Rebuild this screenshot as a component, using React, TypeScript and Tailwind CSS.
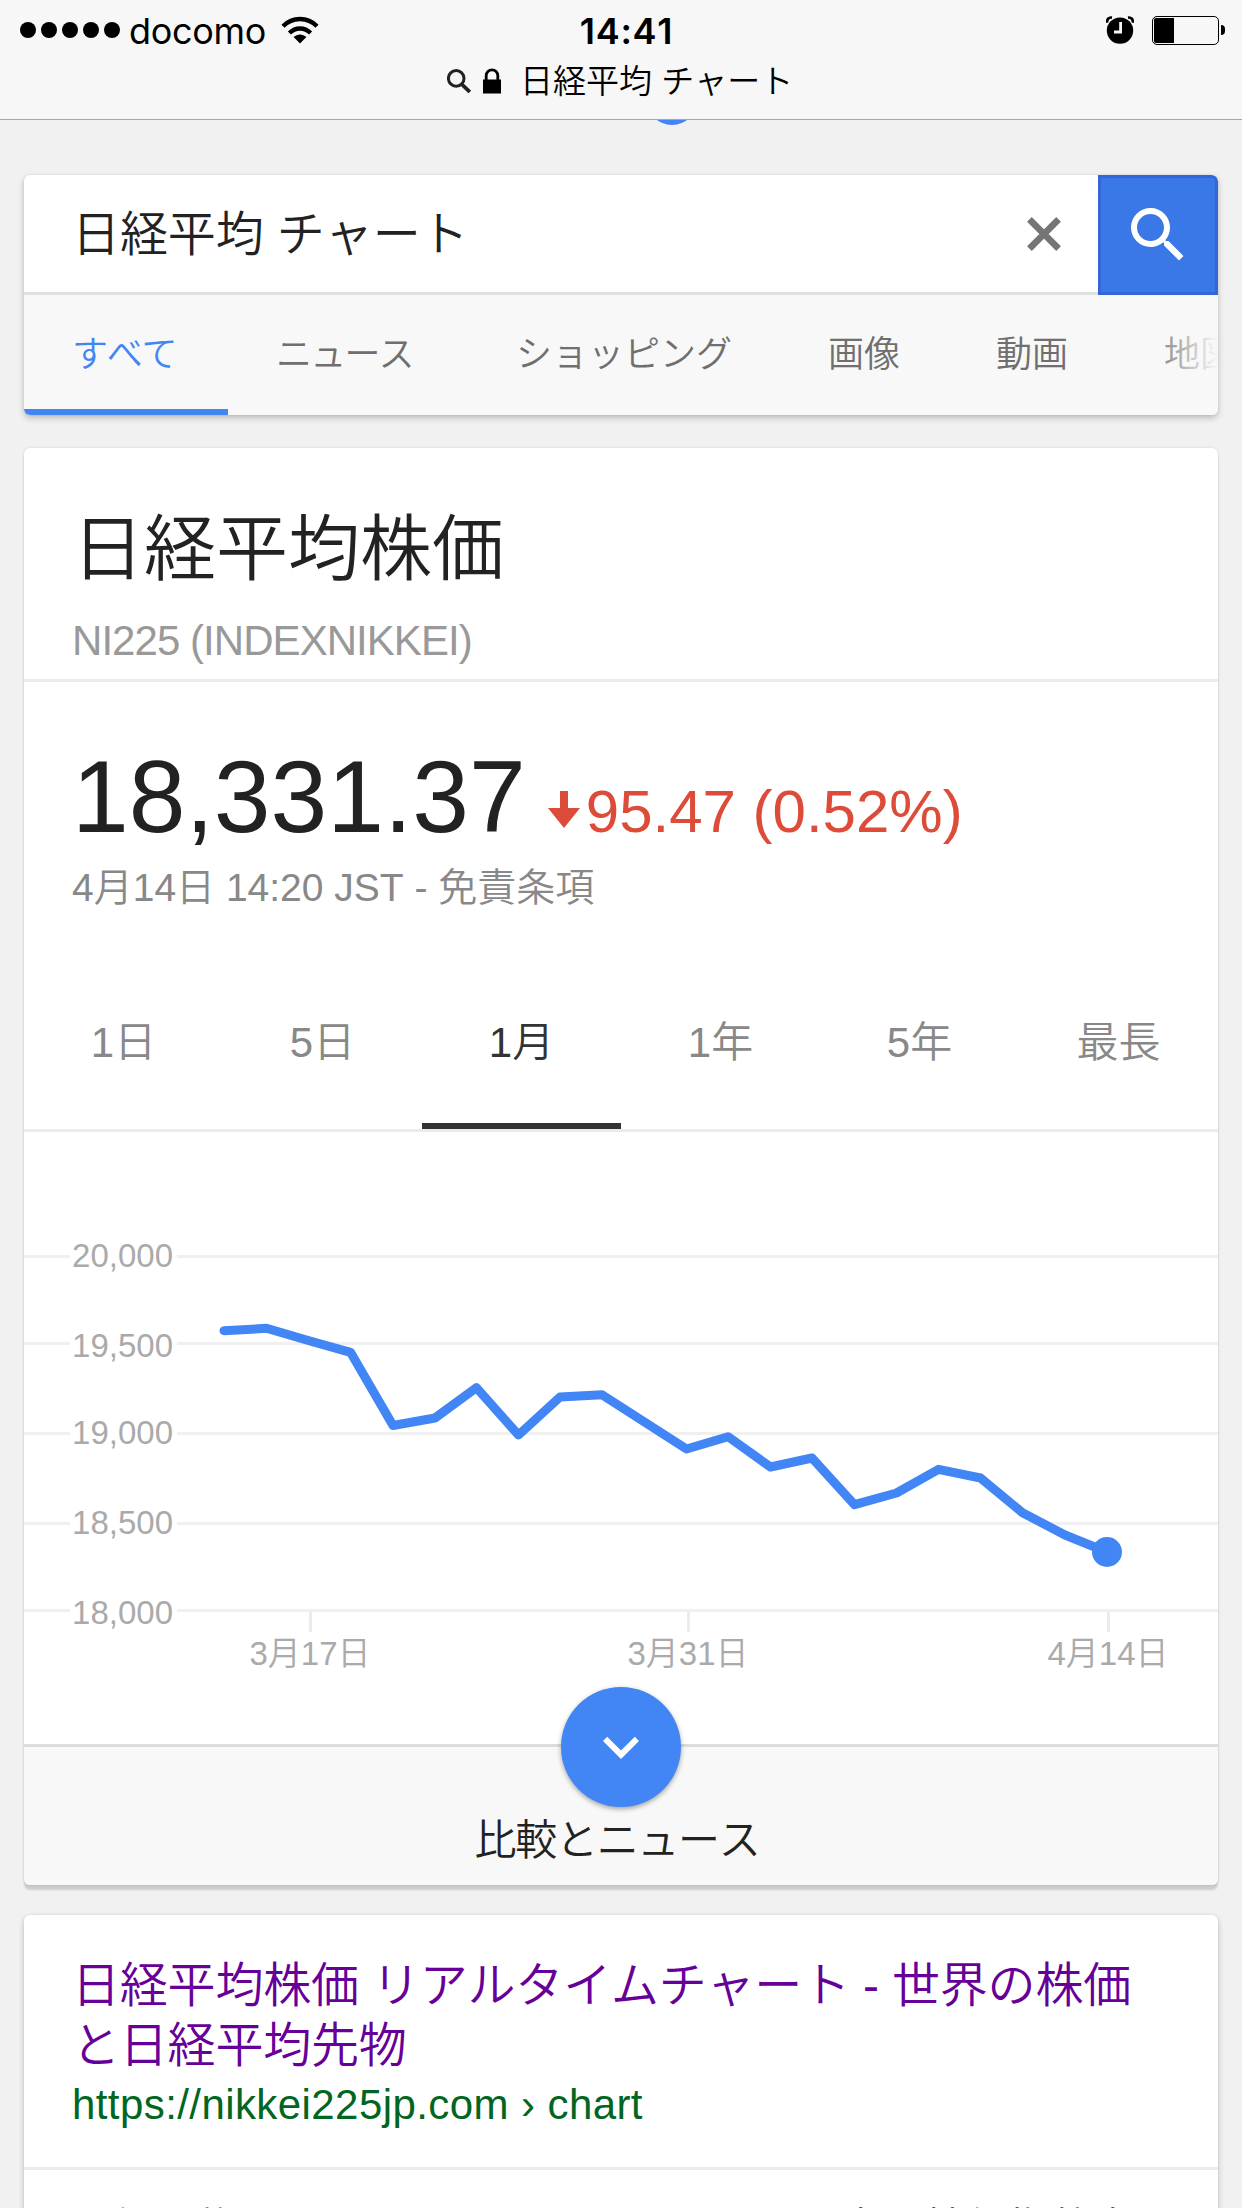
import React from "react";

const searchTabs = [
  { label: "すべて", style: "w-[204px] tracking-[-1.2px] text-[#4285f4] border-b-[6px] border-[#4285f4]" },
  { label: "ニュース", style: "w-60 tracking-[-1.8px] text-[#6f6f6f]" },
  { label: "ショッピング", style: "w-[312px] text-[#6f6f6f]" },
  { label: "画像", style: "w-[168px] text-[#6f6f6f]" },
  { label: "動画", style: "w-[168px] text-[#6f6f6f]" },
  { label: "地図", style: "w-[168px] text-[#6f6f6f]" },
];

const ranges = ["1日", "5日", "1月", "1年", "5年", "最長"];

// Chart coordinates are relative to the 1194x612 drawing area
const points = [
  [200, 198.7],
  [242.5, 196.3],
  [286, 209],
  [326.5, 220.3],
  [369, 293.5],
  [411, 286],
  [452.5, 255.7],
  [494.5, 303],
  [536, 265],
  [578, 262.7],
  [662.5, 317],
  [704, 304.7],
  [746.5, 335],
  [788, 326],
  [830.5, 372.7],
  [872.5, 361],
  [914.5, 337.3],
  [956.5, 346],
  [998.5, 380.7],
  [1041, 403],
  [1083, 420],
];

const yAxis = [
  { label: "20,000", line: 124.5, base: 135 },
  { label: "19,500", line: 211.5, base: 225 },
  { label: "19,000", line: 301.5, base: 312 },
  { label: "18,500", line: 391.5, base: 402 },
  { label: "18,000", line: 478.5, base: 492 },
];

const xAxis = [
  { label: "3月17日", x: 286.5 },
  { label: "3月31日", x: 664.5 },
  { label: "4月14日", x: 1084.5 },
];

const StatusBar = () => (
  <div className="h-[60px] pt-3 pl-5 pr-[17px] grid grid-cols-3 items-start font-['Inter',sans-serif] text-black">
    <div className="h-9 flex items-center">
      <div className="flex gap-[5px]">
        {[0, 1, 2, 3, 4].map((i) => (
          <span key={i} className="size-4 rounded-full bg-black" />
        ))}
      </div>
      <span className="ml-[9px] pt-0.5 text-[36px] leading-9 tracking-[-0.3px]">docomo</span>
      <svg className="ml-[15px] w-[38px] h-[28px]" viewBox="0 0 38 28" fill="none">
        <path d="M2 10.2C11.5 0.6 26.5 0.6 36 10.2" stroke="black" strokeWidth="4.4" />
        <path d="M8.4 17C14.4 11 23.6 11 29.6 17" stroke="black" strokeWidth="4.4" />
        <path d="M19 27.5L12.6 21C16.4 17.6 21.6 17.6 25.4 21Z" fill="black" />
      </svg>
    </div>
    <div className="h-9 pt-px pl-2 text-center text-[36px] leading-9 font-semibold tracking-[0.7px]">14:41</div>
    <div className="h-9 flex items-center justify-end">
      <svg className="w-7 h-[28px]" viewBox="0 0 28 28">
        <circle cx="14" cy="14.6" r="13.2" fill="black" />
        <path d="M1.4 6.6C0.6 3.4 2.6 1.2 6 1.6" stroke="black" strokeWidth="2.6" fill="none" />
        <path d="M26.6 6.6C27.4 3.4 25.4 1.2 22 1.6" stroke="black" strokeWidth="2.6" fill="none" />
        <path d="M14.6 6V16H8" stroke="#f7f7f7" strokeWidth="2.8" fill="none" />
      </svg>
      <div className="ml-[18px] w-[67px] h-[29px] border border-black rounded-[5px] p-px">
        <div className="w-5 h-full bg-black rounded-l-[2px]" />
      </div>
      <div className="ml-0.5 w-1 h-[10px] bg-black rounded-r-full" />
    </div>
  </div>
);

const AddressBar = () => (
  <div className="h-[42px] pl-[447px] flex items-center text-black">
    <svg className="w-6 h-6" viewBox="0 0 24 24" fill="none" stroke="#222" strokeWidth="3">
      <circle cx="9.2" cy="9.4" r="7.8" />
      <path d="M14.5 15L22.8 23" strokeWidth="3.8" />
    </svg>
    <svg className="ml-3 w-[18px] h-[26px]" viewBox="0 0 18 26">
      <rect x="0" y="11.5" width="18" height="14" fill="black" />
      <path d="M3.2 12V7.6a5.8 5.8 0 0 1 11.6 0V12" fill="none" stroke="black" strokeWidth="2.8" />
    </svg>
    <span className="ml-[19px] pt-px text-[33px] leading-[42px] font-[350]">日経平均 チャート</span>
  </div>
);

const SearchCard = () => (
  <div className="h-60 rounded-md bg-white shadow-[0_3px_6px_rgba(0,0,0,0.22),0_0_3px_rgba(0,0,0,0.08)] overflow-hidden">
    <div className="h-[120px] flex">
      <div className="flex-1 flex items-center justify-between pl-12 pr-[37px] border-b-[3px] border-[#e0e0e0]">
        <span className="pt-0.5 text-[48px] leading-[60px] tracking-[-0.1px] font-[350] text-[#222]">日経平均 チャート</span>
        <svg className="size-[34px]" viewBox="0 0 34 34" stroke="#757575" strokeWidth="6.6">
          <path d="M2.4 2.4L31.6 31.6M31.6 2.4L2.4 31.6" />
        </svg>
      </div>
      <button className="size-[120px] flex items-center justify-center rounded-tr-md bg-[#3b78e7] border-[3px] border-[#3367d6]">
        <svg className="size-[72px]" viewBox="0 0 24 24" fill="white">
          <path d="M15.5 14h-.79l-.28-.27A6.47 6.47 0 0 0 16 9.5 6.5 6.5 0 1 0 9.5 16c1.61 0 3.09-.59 4.23-1.57l.27.28v.79l5 4.99L20.49 19l-4.99-5zm-6 0C7.01 14 5 11.99 5 9.5S7.01 5 9.5 5 14 7.01 14 9.5 11.99 14 9.5 14z" />
        </svg>
      </button>
    </div>
    <div className="relative h-[120px] flex bg-[#f8f8f8] overflow-hidden">
      {searchTabs.map((tab) => (
        <div
          key={tab.label}
          className={`shrink-0 pl-12 pt-[3px] text-[36px] leading-[114px] whitespace-nowrap font-[350] ${tab.style}`}
        >
          {tab.label}
        </div>
      ))}
      <div className="absolute right-0 top-0 w-[72px] h-full bg-gradient-to-r from-[#f8f8f8]/0 to-[#f8f8f8]" />
    </div>
  </div>
);

const Chart = () => (
  <svg className="block w-full h-[612px]" viewBox="0 0 1194 612">
    {yAxis.map((y) => (
      <g key={y.label}>
        <path d={`M0 ${y.line}H46M153 ${y.line}H1194`} stroke="#f0f0f0" strokeWidth="3" />
        <text x="149" y={y.base} textAnchor="end" fontSize="33" fill="#aaa">
          {y.label}
        </text>
      </g>
    ))}
    {xAxis.map((x) => (
      <g key={x.label}>
        <path d={`M${x.x} 480V500`} stroke="#ebebeb" strokeWidth="3" />
        <text x={x.x - 0.5} y="533" textAnchor="middle" fontSize="33" fontWeight="350" fill="#aaa">
          {x.label}
        </text>
      </g>
    ))}
    <polyline
      points={points.map((p) => p.join(",")).join(" ")}
      fill="none"
      stroke="#4285f4"
      strokeWidth="9"
      strokeLinecap="round"
      strokeLinejoin="round"
    />
    <circle cx="1083" cy="420" r="15" fill="#4285f4" />
  </svg>
);

const QuoteCard = () => (
  <div className="mt-[33px] h-[1437px] rounded-md bg-white shadow-[0_5px_2px_rgba(0,0,0,0.15),0_0_3px_rgba(0,0,0,0.12)] overflow-hidden">
    <div className="h-[234px] px-12 pt-[56px] border-b-[3px] border-[#ebebeb]">
      <h1 className="text-[72px] leading-[90px] font-[350] text-[#222]">日経平均株価</h1>
      <p className="mt-[23px] text-[42px] leading-[48px] tracking-[-0.95px] text-[#999]">NI225 (INDEXNIKKEI)</p>
    </div>

    <div className="h-[253px] pl-12 pt-[60px]">
      <div className="h-[122px] flex items-baseline leading-[110px]">
        <span className="text-[102px] text-[#222]">18,331.37</span>
        <svg className="ml-[22px] w-8 h-[41px]" viewBox="0 0 32 41" fill="#dd4b39">
          <path d="M12 0h8v17h12L16 37 0 17h12z" />
        </svg>
        <span className="ml-[6px] text-[60px] text-[#dd4b39]">95.47 (0.52%)</span>
      </div>
      <p className="text-[39px] leading-[48px] font-[350] text-[#888]">4月14日 14:20 JST - 免責条項</p>
    </div>

    {/* Range selector */}
    <div className="h-[197px] flex border-b-[3px] border-[#ebebeb]">
      {ranges.map((range) => (
        <div
          key={range}
          className={
            range === "1月"
              ? "flex-1 pt-[83px] text-center text-[42px] leading-[50px] font-[350] text-[#333] border-b-[6px] border-[#333]"
              : "flex-1 pt-[83px] text-center text-[42px] leading-[50px] font-[350] text-[#888]"
          }
        >
          {range}
        </div>
      ))}
    </div>

    <Chart />

    <div className="h-[141px] pt-[69px] pr-[8px] bg-[#f8f8f8] border-t-[3px] border-[#dcdcdc] text-center text-[42px] leading-[50px] tracking-[-1.3px] font-[350] text-[#222]">
      比較とニュース
    </div>
  </div>
);

const ResultCard = () => (
  <div className="mt-[30px] h-[400px] rounded-md bg-white shadow-[0_3px_6px_rgba(0,0,0,0.2),0_0_3px_rgba(0,0,0,0.08)]">
    <div className="h-[255px] px-12 pt-[41px] border-b-[3px] border-[#ebebeb]">
      <h2 className="text-[48px] leading-[60px] tracking-[-0.2px] font-[350] text-[#609]">
        日経平均株価 リアルタイムチャート - 世界の株価
        <br />
        と日経平均先物
      </h2>
      <p className="mt-[5px] text-[42px] leading-[48px] tracking-[0.42px] text-[#006621]">
        https://nikkei225jp.com › chart
      </p>
    </div>
    <p className="px-12 pt-[32px] text-[42px] leading-[54px] font-[350] text-[#222] whitespace-nowrap">
      日経平均 のリアルタイムチャートで、日本の株価指数先
    </p>
  </div>
);

export default function App() {
  return (
    <div
      lang="ja"
      className="w-[1242px] h-[2208px] overflow-hidden bg-[#f1f1f1] [font-kerning:none] font-['Liberation_Sans','Noto_Sans_CJK_JP',sans-serif]"
    >
      <header className="h-[120px] bg-[#f7f7f7] border-b border-[#a7a7a7]">
        <StatusBar />
        <AddressBar />
      </header>

      <main className="relative px-6">
        {/* Bottom edge of the logo scrolled under the header */}
        <div className="absolute left-[647px] top-0 w-[50px] h-[5px] overflow-hidden">
          <div className="-mt-[45px] size-[50px] rounded-full bg-[#4285f4]" />
        </div>
        <div className="h-[55px]" />
        <SearchCard />
        <div className="relative">
          <QuoteCard />
          <button className="absolute left-[537px] bottom-[78px] size-[120px] rounded-full bg-[#4285f4] flex items-center justify-center shadow-[0_2px_5px_rgba(0,0,0,0.35)]">
            <svg className="size-[72px]" viewBox="0 0 24 24" fill="white">
              <path d="M7.41 8.59L12 13.17l4.59-4.58L18 10l-6 6-6-6z" />
            </svg>
          </button>
        </div>
        <ResultCard />
      </main>
    </div>
  );
}
